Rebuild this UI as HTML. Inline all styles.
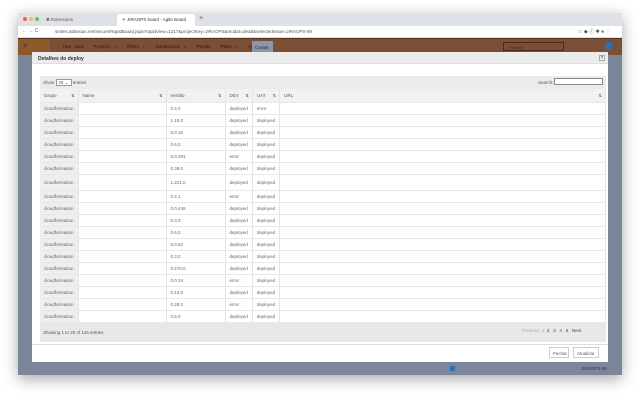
<!DOCTYPE html>
<html><head><meta charset="utf-8"><style>
*{box-sizing:border-box;margin:0;padding:0}
body{width:640px;height:400px;background:#fff;font-family:"Liberation Sans",sans-serif;position:relative;overflow:hidden;font-size:5px;color:#555}
.a{position:absolute}
.win{left:18px;top:13px;width:604px;height:362px;background:#7b869b;box-shadow:0 4px 14px rgba(0,0,0,.35)}
.tabs{left:0;top:0;width:604px;height:13px;background:#dee1e6}
.addr{left:0;top:13px;width:604px;height:12px;background:#fff;border-bottom:1px solid #ddd}
.nav{left:0;top:25px;width:604px;height:17px;background:#7a4f36;border-top:1px solid #5a3520}
.modal{left:14px;top:39px;width:576px;height:310px;background:#fff}
.mh{left:0;top:0;width:576px;height:12px;background:#ebebeb;border-bottom:1px solid #ddd;font-size:5px;color:#333;padding:4px 6px;font-weight:bold}
table{border-collapse:collapse;position:absolute;left:40px;top:89px;width:566px;font-size:4.5px;color:#666}
td,th{border-right:1px solid #e4e4e4;border-bottom:1px solid #e8e8e8;height:12px;padding:0 4px;text-align:left;font-weight:normal;line-height:5px;vertical-align:middle}
th{height:13px;background:#f1f1f1;color:#555;position:relative}
th span{position:absolute;right:3px;top:4px;font-size:4px}
td:first-child{background:#eee}
</style></head><body>
<div class="a win">
 <div class="a tabs">
  <div class="a" style="left:5px;top:4px;width:4px;height:4px;border-radius:50%;background:#ed5f57"></div>
  <div class="a" style="left:11px;top:4px;width:4px;height:4px;border-radius:50%;background:#f6be4f"></div>
  <div class="a" style="left:17px;top:4px;width:4px;height:4px;border-radius:50%;background:#62c654"></div>
  <div class="a" style="left:28px;top:4px;font-size:4.5px">✱ Extensions</div>
  <div class="a" style="left:99px;top:1px;width:78px;height:12px;background:#fff;border-radius:3px 3px 0 0;padding:3px 5px;font-size:4.5px;color:#333"><span style="color:#1d6bd6">✈</span> JIRAOPS board - Agile Board</div>
  <div class="a" style="left:181px;top:2px;font-size:7px">+</div>
 </div>
 <div class="a addr"><div class="a" style="left:4px;top:2px;font-size:5px;color:#666">← → C</div>
  <div class="a" style="left:37px;top:3px;font-size:4.5px;color:#555">smiles.atlassian.net/secure/RapidBoard.jspa?rapidView=1217&amp;projectKey=JIRAOPS&amp;modal=detail&amp;selectedIssue=JIRAOPS-90</div>
  <div class="a" style="left:560px;top:2px;font-size:5px;color:#555">☆ ◆ ⓘ ✱ ● ⋮</div></div>
 <div class="a nav">
  <div class="a" style="left:0;top:0;width:32px;height:16px;background:#8a5a2a"></div>
  <div class="a" style="left:5px;top:4px;color:#333;font-size:7px">≡</div>
  <div class="a" style="left:44px;top:5px;color:#2a1a10;font-size:4.5px;word-spacing:2px">Your work &nbsp; Projects ⌄ &nbsp; Filters ⌄ &nbsp; Dashboards ⌄ &nbsp; People &nbsp; Plans ⌄ &nbsp; Apps ⌄</div>
  <div class="a" style="left:234px;top:2px;width:21px;height:12px;background:#8d96a8;color:#223;font-size:4.5px;padding:4px 3px">Create</div>
  <div class="a" style="left:485px;top:3px;width:61px;height:9px;border:1px solid #4a2a18;color:#3a2010;font-size:4px;padding:2px 3px">⌕ Search</div>
  <div class="a" style="left:587px;top:3px;width:8px;height:8px;border-radius:50%;background:#2d6fb0"></div>
 </div>
 <div class="a modal">
  <div class="a mh">Detalhes do deploy</div>
  <div class="a" style="left:567px;top:3px;width:6px;height:6px;border:1px solid #aaa;font-size:5px;line-height:4px;text-align:center">×</div>
  <div class="a" style="left:8px;top:24px;width:566px;height:13px;background:#ebebeb;padding:4px 3px;font-size:4.5px">Show <span style="border:1px solid #999;background:#fff;padding:0 2px">25 ⌄</span> entries</div>
  <div class="a" style="left:506px;top:28px;font-size:4.5px">Search:</div>
  <div class="a" style="left:522px;top:26px;width:49px;height:7px;border:1px solid #888;background:#fff"></div>
  <div class="a" style="left:8px;top:270px;width:566px;height:20px;background:#e8e8e8;padding:8px 3px;font-size:4.5px">Showing 1 to 20 of 116 entries</div>
  <div class="a" style="left:490px;top:276px;font-size:4.5px;color:#aaa">Previous &nbsp;1 &nbsp;<span style="color:#444">2 &nbsp; 3 &nbsp; 4 &nbsp; 5 &nbsp; Next</span></div>
  <div class="a" style="left:0;top:292px;width:576px;border-top:1px solid #ddd"></div>
  <div class="a" style="left:517px;top:295px;width:20px;height:11px;border:1px solid #ccc;font-size:4.5px;padding:3px 3px">Fechar</div>
  <div class="a" style="left:541px;top:295px;width:26px;height:11px;border:1px solid #ccc;font-size:4.5px;padding:3px 3px">Atualizar</div>
 </div>
 <div class="a" style="left:432px;top:353px;width:5px;height:5px;background:#2d6fb0"></div>
 <div class="a" style="left:563px;top:353px;font-size:4.5px;color:#2a3550">JIRAOPS-90</div>
</div>
<table>
<tr><th style="width:37px">Grupo<span>⇅</span></th><th style="width:88px">Name<span>⇅</span></th><th style="width:59px">Versão<span>⇅</span></th><th style="width:27px">DEV<span>⇅</span></th><th style="width:27px">UAT<span>⇅</span></th><th>URL<span>⇅</span></th></tr>
<tr><td>cloudformation</td><td></td><td>0.4.0</td><td>deployed</td><td>error</td><td></td></tr>
<tr><td>cloudformation</td><td></td><td>1.18.0</td><td>deployed</td><td>deployed</td><td></td></tr>
<tr><td>cloudformation</td><td></td><td>0.0.15</td><td>deployed</td><td>deployed</td><td></td></tr>
<tr><td>cloudformation</td><td></td><td>0.6.0</td><td>deployed</td><td>deployed</td><td></td></tr>
<tr><td>cloudformation</td><td></td><td>0.0.291</td><td>error</td><td>deployed</td><td></td></tr>
<tr><td>cloudformation</td><td></td><td>0.38.0</td><td>deployed</td><td>deployed</td><td></td></tr>
<tr><td style="height:16px">cloudformation</td><td></td><td>1.221.0</td><td>deployed</td><td>deployed</td><td></td></tr>
<tr><td>cloudformation</td><td></td><td>0.4.1</td><td>error</td><td>deployed</td><td></td></tr>
<tr><td>cloudformation</td><td></td><td>0.0.448</td><td>deployed</td><td>deployed</td><td></td></tr>
<tr><td>cloudformation</td><td></td><td>0.3.0</td><td>deployed</td><td>deployed</td><td></td></tr>
<tr><td>cloudformation</td><td></td><td>0.6.0</td><td>deployed</td><td>deployed</td><td></td></tr>
<tr><td>cloudformation</td><td></td><td>0.0.62</td><td>deployed</td><td>deployed</td><td></td></tr>
<tr><td>cloudformation</td><td></td><td>0.3.0</td><td>deployed</td><td>deployed</td><td></td></tr>
<tr><td>cloudformation</td><td></td><td>0.270.0</td><td>deployed</td><td>deployed</td><td></td></tr>
<tr><td>cloudformation</td><td></td><td>0.0.24</td><td>error</td><td>deployed</td><td></td></tr>
<tr><td>cloudformation</td><td></td><td>0.13.0</td><td>deployed</td><td>deployed</td><td></td></tr>
<tr><td>cloudformation</td><td></td><td>0.28.0</td><td>error</td><td>deployed</td><td></td></tr>
<tr><td>cloudformation</td><td></td><td>0.5.0</td><td>deployed</td><td>deployed</td><td></td></tr>
</table>
</body></html>
